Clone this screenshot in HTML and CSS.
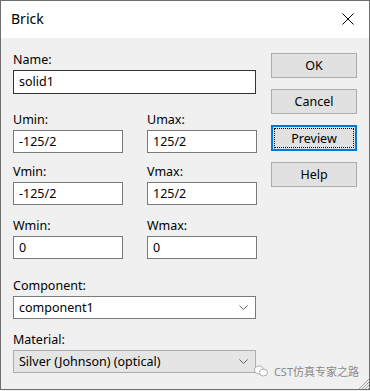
FILE: index.html
```html
<!DOCTYPE html>
<html lang="en">
  <head>
    <meta charset="UTF-8" />
    <meta name="viewport" content="width=device-width, initial-scale=1.0" />
    <title>Brick</title>
    <link rel="stylesheet" href="styles.css">
  </head>
  <body>
    <div class="window">
      <div class="titlebar">
        <span class="title">Brick</span>
        <svg class="close" width="12" height="12" viewBox="0 0 12 12">
          <path d="M0.5 0.5 L11.5 11.5 M11.5 0.5 L0.5 11.5" stroke="#000" stroke-width="1" fill="none" />
        </svg>
      </div>
      <div class="content">
        <div class="form">
          <div class="field">
            <label>Name:</label>
            <div class="input wide focused">solid1</div>
          </div>
          <div class="pair row-u">
            <div class="field">
              <label>Umin:</label>
              <div class="input">-125/2</div>
            </div>
            <div class="field">
              <label>Umax:</label>
              <div class="input">125/2</div>
            </div>
          </div>
          <div class="pair row-v">
            <div class="field">
              <label>Vmin:</label>
              <div class="input">-125/2</div>
            </div>
            <div class="field">
              <label>Vmax:</label>
              <div class="input">125/2</div>
            </div>
          </div>
          <div class="pair row-w">
            <div class="field">
              <label>Wmin:</label>
              <div class="input">0</div>
            </div>
            <div class="field">
              <label>Wmax:</label>
              <div class="input">0</div>
            </div>
          </div>
          <div class="field row-comp">
            <label>Component:</label>
            <div class="combo">
              <span>component1</span>
              <svg class="chevron" width="9" height="5" viewBox="0 0 9 5">
                <path d="M0.5 0.5 L4.5 4.5 L8.5 0.5" stroke="#606060" fill="none" />
              </svg>
            </div>
          </div>
          <div class="field row-mat">
            <label>Material:</label>
            <div class="combo disabled">
              <span>Silver (Johnson) (optical)</span>
              <svg class="chevron" width="9" height="5" viewBox="0 0 9 5">
                <path d="M0.5 0.5 L4.5 4.5 L8.5 0.5" stroke="#606060" fill="none" />
              </svg>
            </div>
          </div>
        </div>
        <div class="buttons">
          <button>OK</button>
          <button>Cancel</button>
          <button class="default"><span>Preview</span></button>
          <button>Help</button>
        </div>
      </div>
      <div class="watermark">
        <svg width="14" height="12" viewBox="0 0 14 12">
          <ellipse cx="5" cy="5" rx="4.5" ry="4" fill="#fff" stroke="#999" stroke-width="0.8" />
          <ellipse cx="9.5" cy="7.5" rx="4" ry="3.5" fill="#fff" stroke="#999" stroke-width="0.8" />
        </svg>
        <span>CST仿真专家之路</span>
      </div>
      <svg class="grip" width="11" height="11" viewBox="0 0 11 11">
        <path d="M11 1 L1 11 M11 4 L4 11 M11 7 L7 11 M11 10 L10 11" stroke="#a0a0a0" stroke-width="1" />
      </svg>
    </div>
  </body>
</html>
```

FILE: styles.css
```css
body {
  margin: 0;
  font-family: "Noto Sans", "Noto Sans CJK SC", sans-serif;
  font-size: 12.5px;
  color: #000;
  background-color: #f0f0f0;
}
.window {
  position: relative;
  width: 370px;
  height: 390px;
  box-sizing: border-box;
  border: 1px solid #6e6e6e;
  background-color: #f0f0f0;
}
.titlebar {
  height: 37px;
  background-color: #fff;
  display: flex;
  align-items: center;
  justify-content: space-between;
  padding: 0 15px 0 10px;
}
.title {
  font-size: 14px;
  margin-top: -2px;
}
.close {
  margin-top: -2px;
}
.content {
  display: flex;
  padding: 14px 0 0 12px;
}
.form {
  width: 243px;
}
.field label {
  display: block;
  height: 16px;
  line-height: 16px;
  margin-bottom: 2px;
}
.pair {
  display: flex;
  gap: 24px;
}
.row-u {
  margin-top: 18px;
}
.row-v {
  margin-top: 11px;
}
.row-w {
  margin-top: 13px;
}
.row-comp {
  margin-top: 19px;
}
.row-mat {
  margin-top: 13px;
}
.input {
  width: 110px;
  height: 23px;
  box-sizing: border-box;
  border: 1px solid #7a7a7a;
  background-color: #fff;
  padding: 0 5px;
  line-height: 21px;
}
.input.wide {
  width: 243px;
  height: 24px;
  line-height: 22px;
}
.input.focused {
  border-color: #333;
}
.combo {
  height: 23px;
  box-sizing: border-box;
  border: 1px solid #7a7a7a;
  background-color: #fff;
  padding: 0 5px 0 5px;
  display: flex;
  align-items: center;
  justify-content: space-between;
}
.combo.disabled {
  background-color: #e5e5e5;
  border-color: #adadad;
}
.chevron {
  margin-right: 2px;
}
.buttons {
  display: flex;
  flex-direction: column;
  gap: 11px;
  margin-left: 15px;
  padding-top: 1px;
}
button {
  width: 86px;
  height: 25px;
  box-sizing: border-box;
  background-color: #e1e1e1;
  border: 1px solid #adadad;
  font-family: inherit;
  font-size: 12.5px;
  color: #000;
  padding: 0;
}
button.default {
  border: 2px solid #0078d7;
  height: 26px;
  padding: 1px;
}
button.default span {
  display: flex;
  align-items: center;
  justify-content: center;
  height: 100%;
  border: 1px dotted #000;
  box-sizing: border-box;
}
.watermark {
  position: absolute;
  right: 10px;
  bottom: 10px;
  display: flex;
  align-items: center;
  gap: 6px;
  font-size: 11px;
  color: #8a8a8a;
}
.grip {
  position: absolute;
  right: 0;
  bottom: 0;
}
```
